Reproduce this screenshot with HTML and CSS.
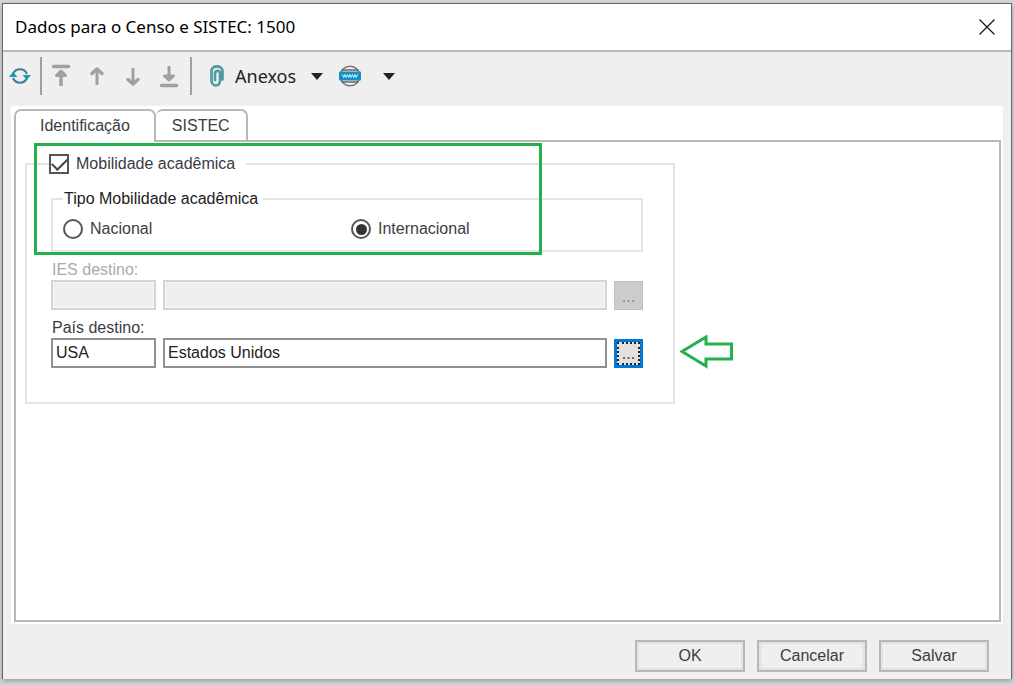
FILE: index.html
```html
<!DOCTYPE html>
<html lang="pt-BR">
<head>
<meta charset="utf-8">
<title>Dados para o Censo e SISTEC</title>
<link rel="stylesheet" href="styles.css">
</head>
<body>
<main class="dialog">
  <header class="titlebar">
    <h1 class="title">Dados para o Censo e SISTEC: 1500</h1>
    <button class="close" type="button" aria-label="Fechar">
      <svg width="16" height="16" viewBox="0 0 16 16"><path d="M.5.5l15 15M15.5.5l-15 15" stroke="#111" stroke-width="1.200"/></svg>
    </button>
  </header>

  <div class="toolbar">
    <button class="tool tool-refresh" type="button" aria-label="Atualizar">
      <svg width="22" height="18" viewBox="0 0 22 18" fill="none">
        <path d="M4 7A7.600 7.600 0 0 1 18 7" stroke="#3c7d98" stroke-width="2"/>
        <path d="M18 11A7.600 7.600 0 0 1 4 11" stroke="#3c7d98" stroke-width="2"/>
        <path d="M0 10L4 5l4.500 5zM13.500 8H22L17.800 13z" fill="#14a0ae"/>
      </svg>
    </button>
    <span class="divider"></span>
    <button class="tool" type="button" aria-label="Primeiro">
      <svg width="20" height="24" viewBox="0 0 20 24" fill="none" stroke="#a0a0a0"><path d="M2.500 2.500h15" stroke-width="3.500" stroke-linecap="round"/><path d="M10 22V8" stroke-width="3.500"/><path d="M5.500 11.500L10 7l4.500 4.500z" fill="#a0a0a0" stroke-width="3" stroke-linejoin="round"/></svg>
    </button>
    <button class="tool" type="button" aria-label="Anterior">
      <svg width="20" height="24" viewBox="0 0 20 24" fill="none" stroke="#a0a0a0"><path d="M10 21V6" stroke-width="3"/><path d="M5 9.500L10 5l5 4.500" stroke-width="3.500" stroke-linecap="round" stroke-linejoin="round"/></svg>
    </button>
    <button class="tool" type="button" aria-label="Próximo">
      <svg width="20" height="24" viewBox="0 0 20 24" fill="none" stroke="#a0a0a0"><path d="M10 4v15" stroke-width="3"/><path d="M5 15.500l5 4.500 5-4.500" stroke-width="3.500" stroke-linecap="round" stroke-linejoin="round"/></svg>
    </button>
    <button class="tool" type="button" aria-label="Último">
      <svg width="20" height="24" viewBox="0 0 20 24" fill="none" stroke="#a0a0a0"><path d="M2.500 21.500h15" stroke-width="3.500" stroke-linecap="round"/><path d="M10 2v14" stroke-width="3"/><path d="M5.500 12l4.500 4 4.500-4z" fill="#a0a0a0" stroke-width="3" stroke-linejoin="round"/></svg>
    </button>
    <span class="divider divider-tight"></span>
    <button class="tool tool-attach" type="button">
      <svg width="14" height="22" viewBox="0 0 14 22" fill="none" stroke-linecap="round">
        <path d="M12.500 14.500V6C12.500-.2 1.500-.2 1.500 6v9.500c0 6.500 8.500 6.500 8.500.5V8.500c0-3.500-5-3.500-5 0V15" stroke="#61898d" stroke-width="2.600"/>
        <path d="M12.500 14.500V6C12.500-.2 1.500-.2 1.500 6v9.500c0 6.500 8.500 6.500 8.500.5V8.500c0-3.500-5-3.500-5 0V15" stroke="#35aeb2" stroke-width="1.200"/>
      </svg>
      <span>Anexos</span>
      <svg width="12" height="7" viewBox="0 0 12 7"><path d="M0 0h12L6 7z" fill="#222"/></svg>
    </button>
    <button class="tool tool-web" type="button" aria-label="Internet">
      <svg width="22" height="22" viewBox="0 0 22 22" fill="none">
        <circle cx="11" cy="11" r="9.800" fill="#f3f3f3" stroke="#777" stroke-width="1.500"/>
        <path d="M2.500 5h17M2.500 17h17" stroke="#666" stroke-width="1.500"/>
        <rect x="0" y="6.500" width="22" height="9" rx="1" fill="#128fc5"/>
        <path d="M3.500 9.500l1.300 3 1.200-3 1.200 3 1.300-3M8.500 9.500l1.300 3 1.200-3 1.200 3 1.300-3M13.500 9.500l1.300 3 1.200-3 1.200 3 1.300-3" stroke="#d8f1fa" stroke-width="1"/>
      </svg>
      <svg width="12" height="7" viewBox="0 0 12 7"><path d="M0 0h12L6 7z" fill="#222"/></svg>
    </button>
  </div>

  <section class="pages">
    <div class="tabs" role="tablist">
      <button class="tab tab-active" type="button" role="tab" aria-selected="true">Identificação</button>
      <button class="tab" type="button" role="tab" aria-selected="false">SISTEC</button>
    </div>
    <div class="panel" role="tabpanel">
      <fieldset class="group mobility">
        <legend class="mobility-legend">
          <label class="option"><input class="check" type="checkbox" checked>Mobilidade acadêmica</label>
        </legend>
        <fieldset class="group kind">
          <legend class="kind-legend">Tipo Mobilidade acadêmica</legend>
          <label class="option"><input class="radio" type="radio" name="tipo">Nacional</label>
          <label class="option"><input class="radio" type="radio" name="tipo" checked>Internacional</label>
        </fieldset>
        <div class="field">
          <label class="label label-off" for="ies">IES destino:</label>
          <div class="lookup">
            <input class="text" id="ies" type="text" disabled>
            <input class="text" type="text" aria-label="Nome da IES destino" disabled>
            <button class="browse" type="button" aria-label="Procurar IES" disabled>...</button>
          </div>
        </div>
        <div class="field">
          <label class="label" for="pais">País destino:</label>
          <div class="lookup">
            <input class="text" id="pais" type="text" value="USA">
            <input class="text" type="text" aria-label="Nome do país destino" value="Estados Unidos">
            <button class="browse browse-focus" type="button" aria-label="Procurar país"><span class="browse-face">...</span></button>
          </div>
        </div>
        <div class="highlight"></div>
        <svg class="arrow" width="54" height="34" viewBox="0 0 54 34" fill="none"><path d="M2 16.500L26 2v7h25.500v15H26v7z" stroke="#22b14c" stroke-width="3"/></svg>
      </fieldset>
    </div>
  </section>

  <footer class="actions">
    <button class="action" type="button">OK</button>
    <button class="action" type="button">Cancelar</button>
    <button class="action" type="button">Salvar</button>
  </footer>
</main>
</body>
</html>
```
FILE: styles.css
```css
* {
  box-sizing: border-box;
}

body {
  display: flex;
  min-height: 100vh;
  margin: 0;
  padding: 3px 2px 7px;
  background: #d6d6d6;
  color: #3c3c44;
  font: 16px/20px "Liberation Sans", Arial, sans-serif;
}

button,
input {
  margin: 0;
  color: inherit;
  font: inherit;
}

svg {
  display: block;
  flex: none;
}

.dialog {
  display: flex;
  flex: 1;
  flex-direction: column;
  border: 1px solid #666;
  border-bottom: 0;
  background: #efefef;
  box-shadow: 0 2px 5px #999;
}

.titlebar {
  display: flex;
  align-items: center;
  justify-content: space-between;
  height: 48px;
  padding: 0 16px 0 12px;
  border-bottom: 2px solid #b8b8b8;
  background: #fff;
}

.title {
  margin: 0;
  color: #000;
  font: 17px/24px "Noto Sans", "Open Sans", sans-serif;
}

.close,
.tool {
  display: flex;
  align-items: center;
  padding: 0;
  border: 0;
  background: none;
}

.toolbar {
  display: flex;
  align-items: center;
  gap: 16px;
  height: 54px;
  padding: 0 6px 6px;
}

.tool-refresh {
  margin-right: -7px;
}

.divider {
  width: 2px;
  height: 38px;
  margin-right: -7px;
  background: #a0a0a0;
}

.divider-tight {
  margin-right: 2px;
  margin-left: -5px;
}

.tool-attach {
  gap: 11px;
  color: #222;
  font: 18px/24px "Noto Sans", "Open Sans", sans-serif;
}

.tool-attach span {
  margin-right: 4px;
}

.tool-web {
  gap: 22px;
}

.pages {
  display: flex;
  flex: 1;
  flex-direction: column;
  margin: 0 8px;
  padding: 3px 2px 2px 3px;
  background: #fff;
}

.tabs {
  display: flex;
  align-items: flex-start;
  padding-right: 40px;
}

.tab {
  height: 31px;
  padding: 0 16px;
  border: 2px solid #b8b8b8;
  border-bottom: 0;
  border-left: 0;
  border-radius: 7px 7px 0 0;
  background: #fff;
}

.tab-active {
  position: relative;
  height: 33px;
  margin-bottom: -2px;
  padding: 0 24px 2px;
  border-left: 2px solid #b8b8b8;
}

.panel {
  flex: 1;
  padding: 12px 10px 24px 9px;
  border: 2px solid #b8b8b8;
}

.group {
  min-width: 0;
  margin: 0;
  border: 2px solid #e4e4e4;
}

.mobility {
  position: relative;
  max-width: 650px;
  padding: 15px 30px 34px 24px;
}

.mobility-legend {
  margin-left: -2px;
  padding: 0 11px 0 0;
}

.option {
  display: flex;
  align-items: center;
  gap: 7px;
}

.check,
.radio {
  display: grid;
  flex: none;
  width: 20px;
  height: 20px;
  border: 2px solid #555;
  background: #fff;
  appearance: none;
  place-items: center;
}

.check:checked::before {
  width: 13px;
  height: 7px;
  margin-top: -4px;
  border: solid #444;
  border-width: 0 0 2px 2px;
  content: "";
  transform: rotate(-45deg);
}

.radio {
  border-radius: 50%;
}

.radio:checked::before {
  width: 11px;
  height: 11px;
  border-radius: 50%;
  background: #333;
  content: "";
}

.kind {
  display: grid;
  grid-template-columns: 288px 1fr;
  padding: 10px 10px 11px;
}

.kind-legend {
  padding: 0 5px 0 1px;
  color: #222;
}

.field {
  padding-top: 8px;
}

.label {
  display: block;
  padding-left: 1px;
}

.label-off {
  color: #aaa;
}

.lookup {
  display: grid;
  grid-template-columns: 105px 1fr 29px;
  align-items: center;
  column-gap: 7px;
}

.text {
  width: 100%;
  height: 30px;
  min-width: 0;
  padding: 0 3px;
  border: 2px solid #909090;
  background: #fff;
  color: #222;
}

.text:disabled {
  border-color: #d4d4d4;
  background: #efefef;
  box-shadow: inset 0 0 0 1px #f8f8f8;
}

.browse {
  height: 29px;
  padding: 0;
  border: 1px solid #bfbfbf;
  background: #ccc;
  color: #888;
  line-height: 30px;
}

.browse-focus {
  border: 3px solid #0078d7;
  background: #e1e1e1;
  color: #333;
}

.browse-face {
  display: block;
  height: 23px;
  border: 2px dotted #222;
  line-height: 20px;
}

.highlight {
  position: absolute;
  top: -31px;
  right: 131px;
  left: 7px;
  height: 112px;
  border: 3px solid #22b14c;
  pointer-events: none;
}

.arrow {
  position: absolute;
  right: -61px;
  bottom: 33px;
}

.actions {
  display: flex;
  flex-wrap: wrap;
  justify-content: flex-end;
  gap: 12px;
  padding: 16px 22px 7px;
}

.action {
  width: 110px;
  height: 32px;
  padding: 0;
  border: 2px solid #b8b8b8;
  background: #efefef;
  box-shadow: inset 0 0 0 2px #e2e2e2;
}
```
